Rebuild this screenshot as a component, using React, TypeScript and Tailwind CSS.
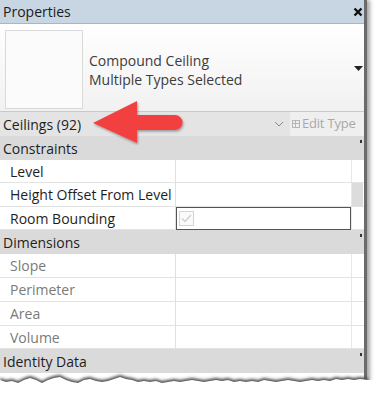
import React from 'react';

const font = { fontFamily: '"Open Sans", "Noto Sans", sans-serif' };

type Row = { label: string; h: string; readOnly?: boolean; thumb?: boolean; boxed?: boolean };

const groups: { title: string; rows: Row[] }[] = [
  {
    title: 'Constraints',
    rows: [
      { label: 'Level', h: 'h-[23px]' },
      { label: 'Height Offset From Level', h: 'h-[24px]', thumb: true },
      { label: 'Room Bounding', h: 'h-[23px]', boxed: true },
    ],
  },
  {
    title: 'Dimensions',
    rows: [
      { label: 'Slope', h: 'h-[24px]', readOnly: true },
      { label: 'Perimeter', h: 'h-[24px]', readOnly: true },
      { label: 'Area', h: 'h-[24px]', readOnly: true },
      { label: 'Volume', h: 'h-[23px]', readOnly: true },
    ],
  },
];

function GroupHeader({ title }: { title: string }) {
  return (
    <div className="flex h-[24px] items-center bg-[#dadada]">
      <span className="flex-1 pl-[3px] text-[14px] text-[#1e1e1e]">{title}</span>
      <span className="mr-[2px] mt-[4px] h-[3px] w-[2px] self-start bg-[#333]" />
    </div>
  );
}

function PropRow({ row }: { row: Row }) {
  return (
    <div className={`flex ${row.h} border-b border-[#e3e3e3] bg-white`}>
      <div
        className={`flex w-[176px] items-center border-r border-[#e0e0e0] pl-[10px] text-[14px] ${
          row.readOnly ? 'text-[#7a7a7a]' : 'text-[#1e1e1e]'
        }`}
      >
        {row.label}
      </div>
      <div
        className={`flex w-[175px] items-center ${row.boxed ? '-mb-px border border-[#555]' : ''}`}
      >
        {row.boxed && (
          <svg width="15" height="15" viewBox="0 0 15 15" className="ml-[2px]">
            <rect x="0.5" y="0.5" width="14" height="14" fill="#fafafa" stroke="#d4d4d4" />
            <path d="M3 7.5 L6 10.5 L12 4" fill="none" stroke="#cfcfcf" strokeWidth="1.3" />
          </svg>
        )}
      </div>
      <div className="flex w-[12px] border-l border-[#e8e8e8]">
        {row.thumb && <div className="h-full w-full bg-[#dcdcdc]" />}
      </div>
    </div>
  );
}

const tear =
  'M0 9 L6 11 L12 10 L18 12 L24 9 L30 7 L36 9 L42 12 L48 9 L54 7 L60 6 L66 9 L72 11 L78 12 L84 9 L90 8 L96 10 L102 11 L108 10 L114 8 L120 6 L126 8 L132 9 L138 11 L144 10 L150 11 L156 10 L162 12 L168 11 L174 10 L180 11 L186 10 L192 9 L198 10 L204 11 L210 10 L216 9 L222 10 L228 9 L234 11 L240 10 L246 11 L252 10 L258 11 L264 9 L270 10 L276 11 L282 10 L288 9 L294 10 L300 11 L306 10 L312 9 L318 10 L324 9 L330 10 L336 8 L342 9 L348 8 L354 9 L360 8 L368 9';

export default function App() {
  return (
    <div className="relative h-[400px] w-[377px] overflow-hidden bg-white" style={font}>
      <div className="w-[367px] border-r-[3px] border-[#6b6b6b] shadow-[3px_0_4px_rgba(0,0,0,0.35)]">
        {/* title bar */}
        <div className="flex h-[24px] items-center border-b border-[#a9b6c3] bg-[#c8d5e2]">
          <span className="flex-1 pl-[3px] text-[14px] text-[#1b1b1b]">Properties</span>
          <svg width="10" height="10" viewBox="0 0 10 10" className="mr-[1px]">
            <path d="M1.5 1.5 L8.5 8.5 M8.5 1.5 L1.5 8.5" stroke="#111" strokeWidth="2.4" />
          </svg>
        </div>

        {/* type selector */}
        <div className="flex h-[87px] items-center bg-gradient-to-b from-white to-[#f1f1f1] pl-[5px] pr-[1px]">
          <div className="mb-[2px] h-[79px] w-[78px] self-end border border-[#d9d9d9] bg-[#fbfbfb]" />
          <div className="flex-1 pl-[6px] pt-[4px] text-[14px] leading-[19px] text-[#3c3c3c]">
            <div>Compound Ceiling</div>
            <div>Multiple Types Selected</div>
          </div>
          <svg width="9" height="5" viewBox="0 0 9 5" className="mt-[2px]">
            <path d="M0 0 H9 L4.5 5 Z" fill="#222" />
          </svg>
        </div>

        {/* instance filter + edit type */}
        <div className="flex h-[25px] border-t border-[#c9c9c9] bg-[#e4e4e4]">
          <div className="flex flex-1 items-center pl-[3px] text-[14px] text-[#1e1e1e]">
            <span className="flex-1">Ceilings (92)</span>
            <svg width="10" height="6" viewBox="0 0 10 6" className="mr-[6px]">
              <path d="M1 1 L5 5 L9 1" fill="none" stroke="#8a8a8a" strokeWidth="1" />
            </svg>
          </div>
          <div className="flex w-[74px] items-center gap-[2px] overflow-hidden bg-[#efefef] pl-[2px] text-[13px] tracking-[-0.2px] whitespace-nowrap text-[#a8a8a8]">
            <svg width="8" height="8" viewBox="0 0 8 8" className="shrink-0">
              <rect x="0.5" y="0.5" width="7" height="7" fill="none" stroke="#b5b5b5" />
              <path d="M0.5 3.5 H7.5 M3.5 0.5 V7.5" stroke="#b5b5b5" />
            </svg>
            <span>Edit Type</span>
          </div>
        </div>

        {/* property grid */}
        {groups.map((g) => (
          <div key={g.title}>
            <GroupHeader title={g.title} />
            {g.rows.map((r) => (
              <PropRow key={r.label} row={r} />
            ))}
          </div>
        ))}
        <GroupHeader title="Identity Data" />
        <div className="h-[30px] bg-white" />
      </div>

      {/* torn paper edge */}
      <svg className="absolute left-0 top-[367px]" width="377" height="33" viewBox="0 0 377 33">
        <defs>
          <filter id="tearShadow" x="-5%" y="-50%" width="110%" height="200%">
            <feGaussianBlur stdDeviation="1.4" />
          </filter>
        </defs>
        <path d={`${tear} L368 16 L0 16 Z`} fill="#4a4a4a" filter="url(#tearShadow)" transform="translate(0 2)" />
        <path d={`${tear} L377 9 L377 33 L0 33 Z`} fill="white" transform="translate(0 4)" />
      </svg>

      {/* red callout arrow */}
      <svg className="absolute left-[90px] top-[99px]" width="96" height="46" viewBox="0 0 96 46">
        <defs>
          <filter id="arrowShadow" x="-10%" y="-20%" width="120%" height="140%">
            <feDropShadow dx="1" dy="1.5" stdDeviation="1.2" floodColor="#000" floodOpacity="0.35" />
          </filter>
        </defs>
        <path
          d="M3 24 L47 2 L47 16 L85 16 A7.5 7.5 0 0 1 85 31 L47 31 L47 44 Z"
          fill="#f2403f"
          filter="url(#arrowShadow)"
        />
      </svg>
    </div>
  );
}
